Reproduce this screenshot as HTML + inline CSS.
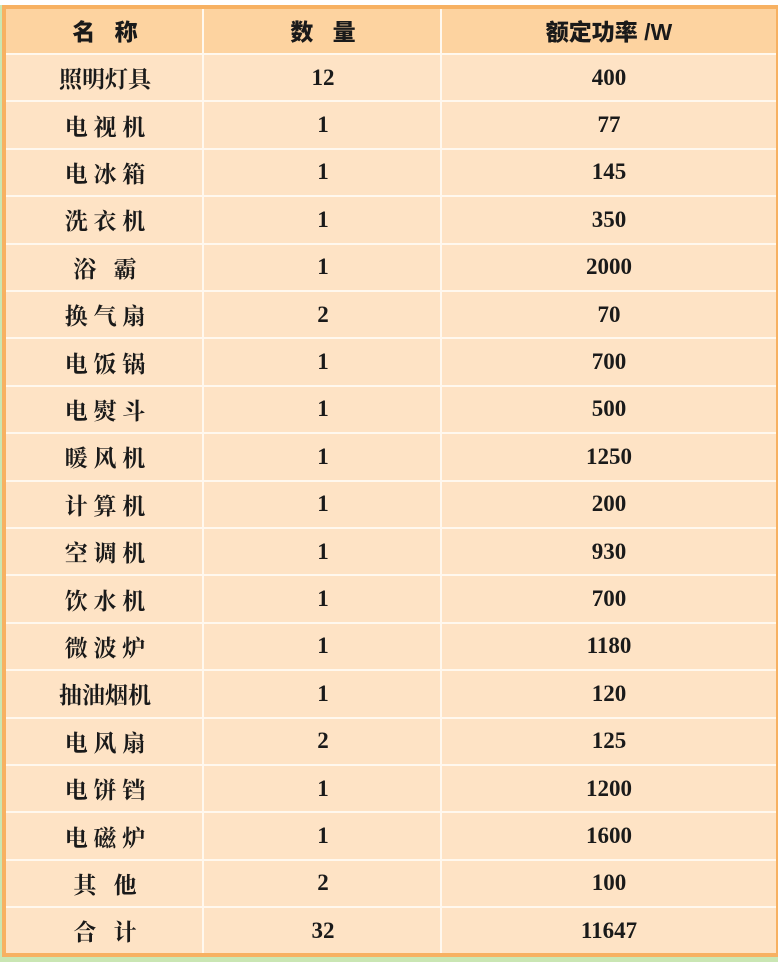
<!DOCTYPE html>
<html><head><meta charset="utf-8"><style>
html,body{margin:0;padding:0;width:780px;height:962px;overflow:hidden;background:#c9e6b3;position:relative}
#top{position:absolute;left:0;top:0;width:780px;height:5px;background:#fff}
#rt{position:absolute;right:0;top:0;width:2px;height:962px;background:#fff}
#box{position:absolute;left:2px;top:5px;width:770px;height:944px;border:4px solid #f7b162;border-right-width:3px;background:#fee3c5}
#hdr{position:absolute;left:0;top:0;width:770px;height:44px;background:#fdd3a0}
.r{position:absolute;left:0;width:770px;height:47.4px;border-top:2px solid #fff8ee;box-sizing:border-box;display:flex;align-items:center;font-family:"Liberation Serif","Noto Serif CJK SC",serif;font-weight:bold;font-size:23px;color:#1a1a1a}
.r div{text-align:center}
.a{width:198px}.b{width:238px}.c{width:334px}
.v1,.v2{position:absolute;top:0;width:2px;height:944px;background:#fff8ee}
.v1{left:196px}.v2{left:434px}
.h{font-family:"Liberation Sans","Noto Sans CJK SC",sans-serif;font-weight:900}
</style></head><body>
<div id="top"></div>
<div id="box">
<div id="hdr"></div>
<div class="r h" style="top:-2px;height:46px;border-top:none"><div class="a">名&nbsp;&nbsp;&nbsp;称</div><div class="b">数&nbsp;&nbsp;&nbsp;量</div><div class="c">额定功率 /W</div></div>
<div class="r" style="top:44px"><div class="a">照明灯具</div><div class="b">12</div><div class="c">400</div></div>
<div class="r" style="top:91.4px"><div class="a">电 视 机</div><div class="b">1</div><div class="c">77</div></div>
<div class="r" style="top:138.8px"><div class="a">电 冰 箱</div><div class="b">1</div><div class="c">145</div></div>
<div class="r" style="top:186.2px"><div class="a">洗 衣 机</div><div class="b">1</div><div class="c">350</div></div>
<div class="r" style="top:233.6px"><div class="a">浴&nbsp;&nbsp;&nbsp;霸</div><div class="b">1</div><div class="c">2000</div></div>
<div class="r" style="top:281px"><div class="a">换 气 扇</div><div class="b">2</div><div class="c">70</div></div>
<div class="r" style="top:328.4px"><div class="a">电 饭 锅</div><div class="b">1</div><div class="c">700</div></div>
<div class="r" style="top:375.8px"><div class="a">电 熨 斗</div><div class="b">1</div><div class="c">500</div></div>
<div class="r" style="top:423.2px"><div class="a">暖 风 机</div><div class="b">1</div><div class="c">1250</div></div>
<div class="r" style="top:470.6px"><div class="a">计 算 机</div><div class="b">1</div><div class="c">200</div></div>
<div class="r" style="top:518px"><div class="a">空 调 机</div><div class="b">1</div><div class="c">930</div></div>
<div class="r" style="top:565.4px"><div class="a">饮 水 机</div><div class="b">1</div><div class="c">700</div></div>
<div class="r" style="top:612.8px"><div class="a">微 波 炉</div><div class="b">1</div><div class="c">1180</div></div>
<div class="r" style="top:660.2px"><div class="a">抽油烟机</div><div class="b">1</div><div class="c">120</div></div>
<div class="r" style="top:707.6px"><div class="a">电 风 扇</div><div class="b">2</div><div class="c">125</div></div>
<div class="r" style="top:755px"><div class="a">电 饼 铛</div><div class="b">1</div><div class="c">1200</div></div>
<div class="r" style="top:802.4px"><div class="a">电 磁 炉</div><div class="b">1</div><div class="c">1600</div></div>
<div class="r" style="top:849.8px"><div class="a">其&nbsp;&nbsp;&nbsp;他</div><div class="b">2</div><div class="c">100</div></div>
<div class="r" style="top:897.2px"><div class="a">合&nbsp;&nbsp;&nbsp;计</div><div class="b">32</div><div class="c">11647</div></div>
<div class="v1"></div><div class="v2"></div>
</div>
<div id="rt"></div>
</body></html>
